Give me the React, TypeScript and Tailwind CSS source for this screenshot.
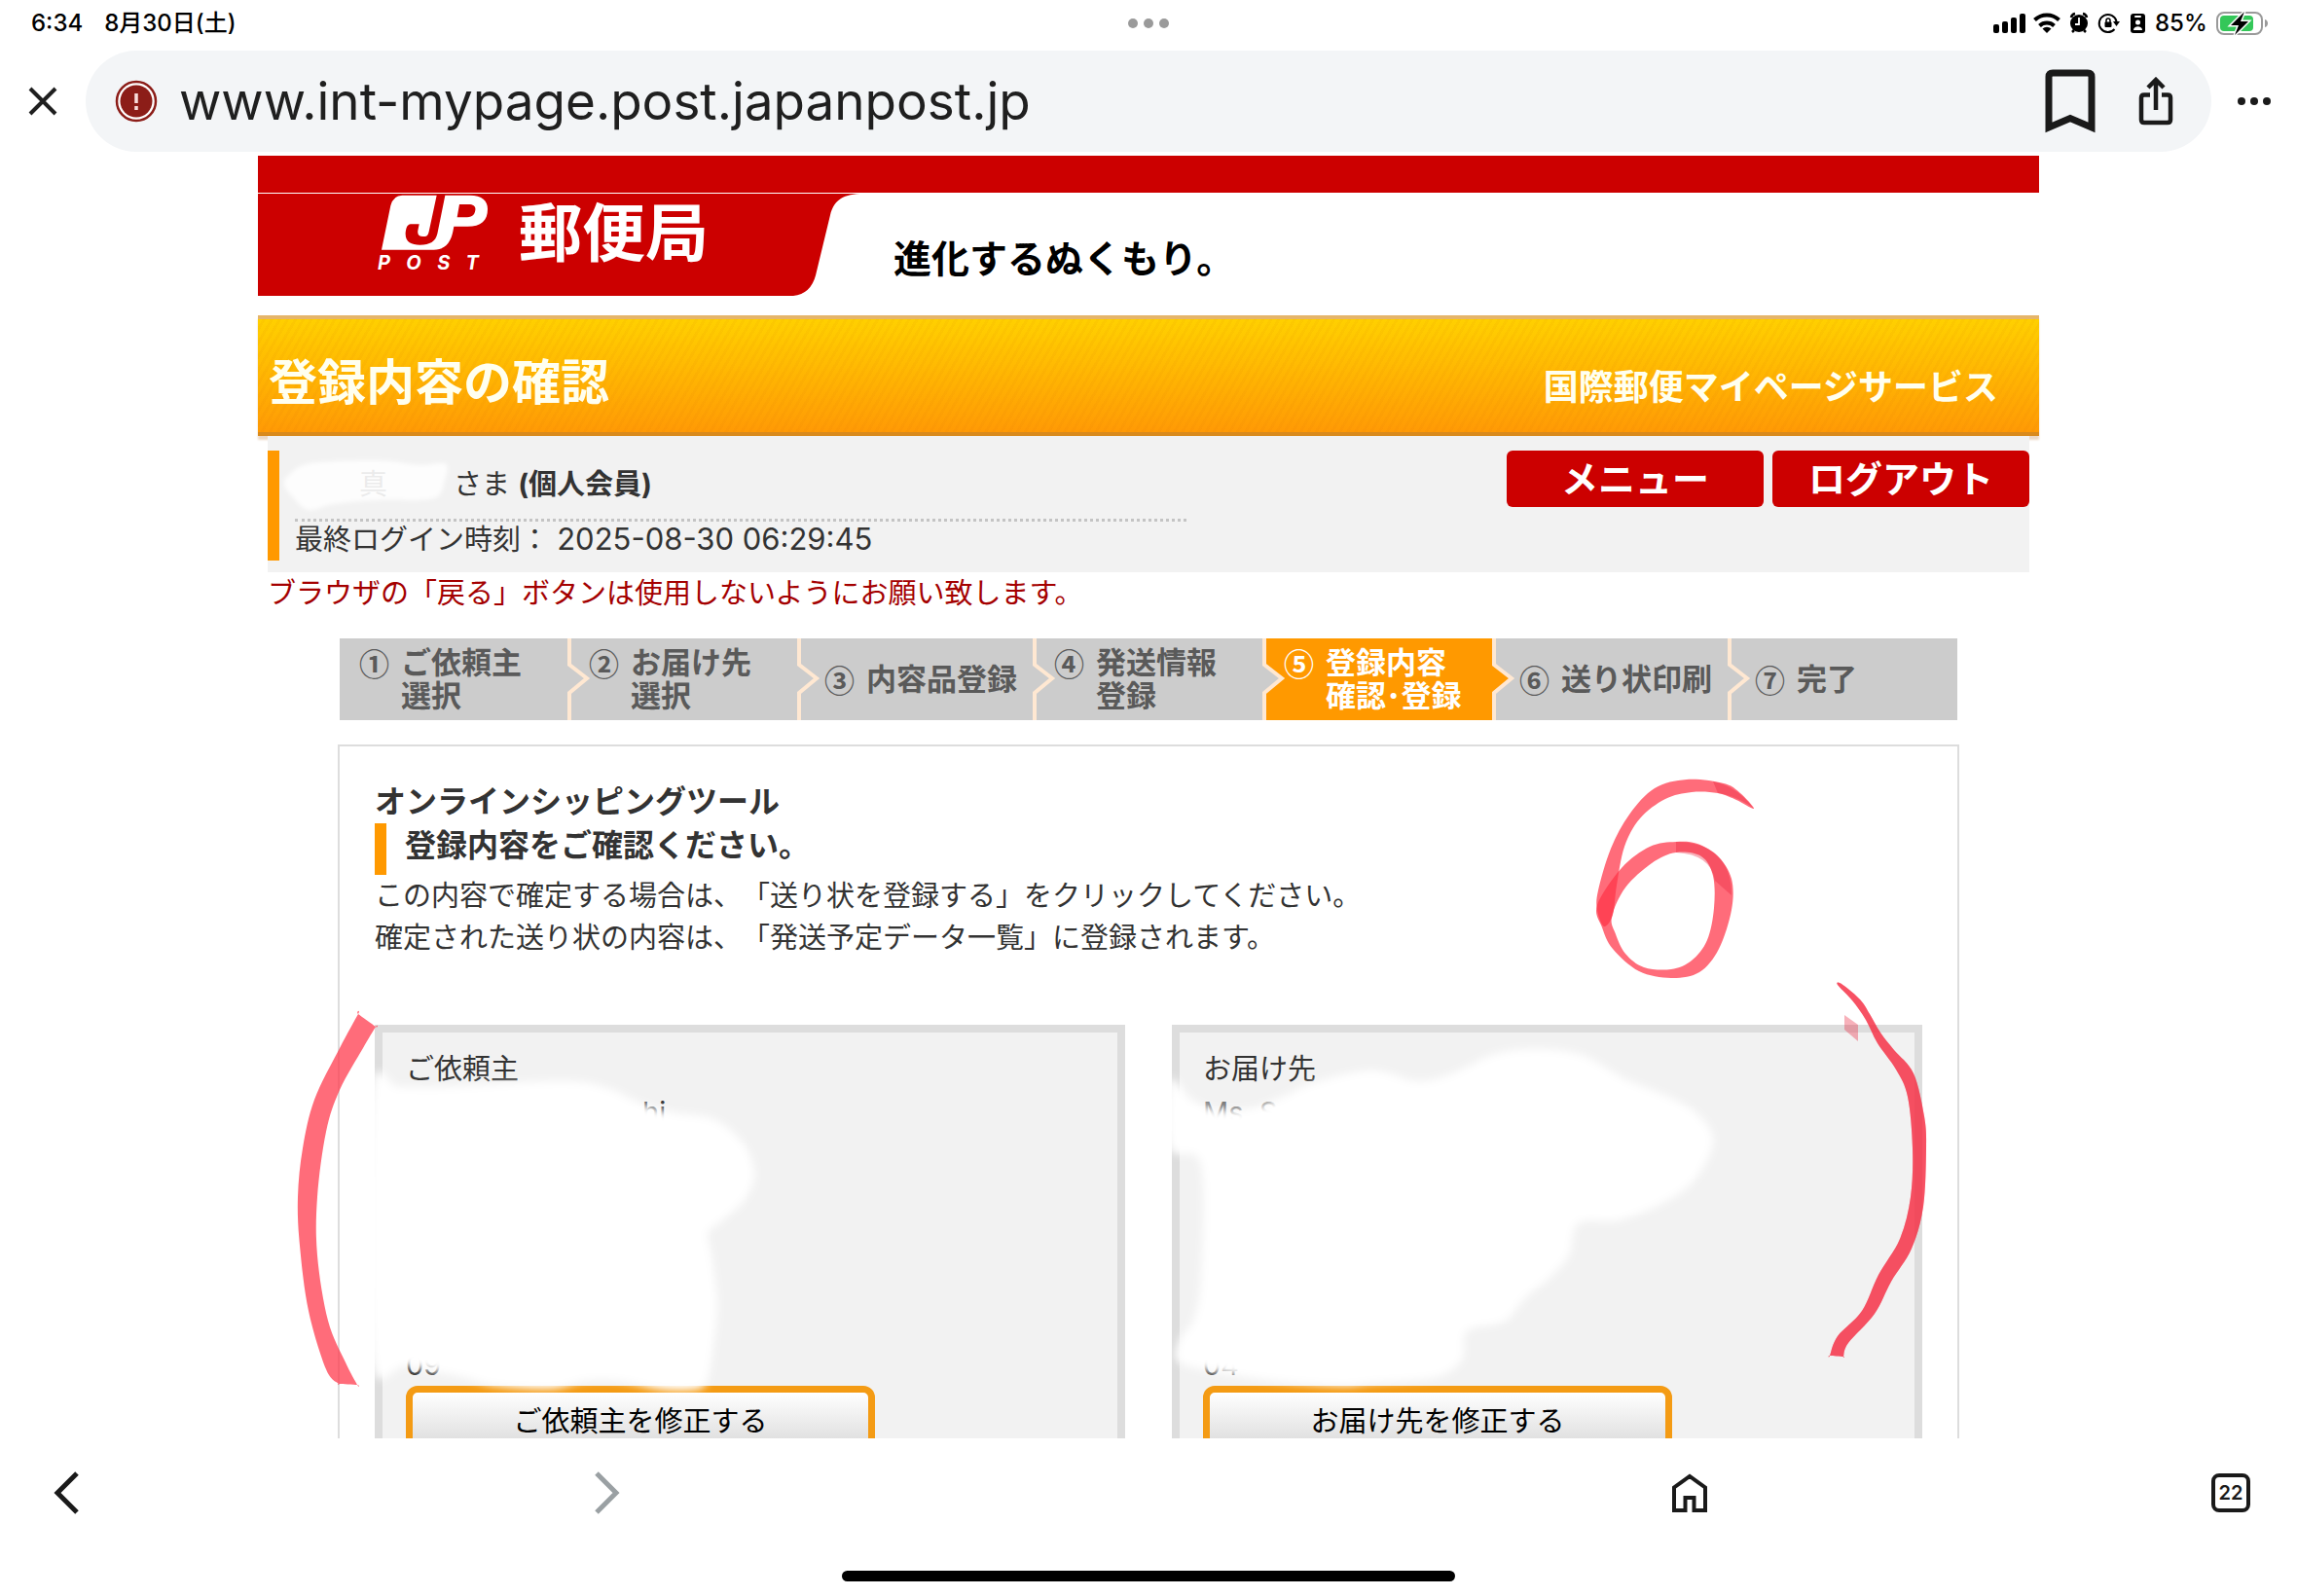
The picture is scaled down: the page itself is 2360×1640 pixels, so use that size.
import { ReactNode } from "react";
import clsx from "clsx";

interface Step {
  mark: string;
  lines: string[];
  active?: boolean;
}

type Point = [number, number];

const STEPS: Step[] = [
  { mark: "①", lines: ["ご依頼主", "選択"] },
  { mark: "②", lines: ["お届け先", "選択"] },
  { mark: "③", lines: ["内容品登録"] },
  { mark: "④", lines: ["発送情報", "登録"] },
  { mark: "⑤", lines: ["登録内容", "確認･登録"], active: true },
  { mark: "⑥", lines: ["送り状印刷"] },
  { mark: "⑦", lines: ["完了"] },
];

const NAME_MASK: Point[] = [
  [298, 487], [320, 476], [388, 473], [430, 478], [458, 477], [456, 496], [450, 510], [430, 514],
  [388, 514], [343, 518], [317, 524], [300, 510], [292, 497],
];

const SENDER_MASK: Point[] = [
  [382, 1122], [410, 1117], [452, 1117], [578, 1111], [624, 1118], [655, 1132], [690, 1143],
  [733, 1150], [762, 1173], [775, 1203], [767, 1230], [739, 1257], [727, 1267], [731, 1290],
  [737, 1340], [732, 1390], [726, 1420], [714, 1428], [680, 1428], [636, 1419], [600, 1419],
  [567, 1427], [510, 1424], [475, 1415], [418, 1404], [382, 1395],
];

const RECEIVER_MASK: Point[] = [
  [1202, 1110], [1225, 1130], [1250, 1140], [1285, 1139], [1315, 1128], [1352, 1112], [1410, 1100],
  [1455, 1111], [1490, 1104], [1536, 1083], [1582, 1078], [1628, 1085], [1668, 1108], [1725, 1132],
  [1755, 1157], [1758, 1183], [1730, 1223], [1668, 1253], [1622, 1257], [1612, 1290], [1592, 1313],
  [1568, 1333], [1545, 1358], [1507, 1368], [1502, 1397], [1476, 1415], [1410, 1421], [1375, 1424],
  [1295, 1417], [1216, 1402], [1211, 1380], [1226, 1357], [1234, 1313], [1234, 1197], [1202, 1180],
];

const LEFT_BRACKET: Point[] = [
  [368, 1042], [368, 1042], [349, 1077], [323, 1130], [311, 1180], [306, 1230], [308, 1280],
  [317, 1347], [335, 1407], [348, 1422], [348, 1422], [367, 1423], [367, 1423], [355, 1400],
  [337, 1357], [326, 1290], [326, 1230], [335, 1163], [349, 1120], [373, 1077], [386, 1055],
  [386, 1055],
];

const RIGHT_BRACKET: Point[] = [
  [1892, 1011], [1911, 1027], [1921, 1042], [1932, 1061], [1946, 1079], [1966, 1103], [1977, 1147],
  [1979, 1180], [1976, 1240], [1964, 1283], [1943, 1317], [1926, 1350], [1899, 1380], [1894, 1394],
  [1894, 1394], [1880, 1393], [1880, 1393], [1888, 1373], [1913, 1347], [1930, 1310], [1952, 1273],
  [1963, 1230], [1965, 1180], [1960, 1127], [1948, 1099], [1929, 1072], [1917, 1048], [1903, 1028],
  [1888, 1012],
];

const SIX_HOOK: Point[] = [
  [1802, 831], [1788, 815], [1771, 805], [1733, 801], [1700, 810], [1674, 837], [1655, 872],
  [1642, 915], [1641, 935], [1648, 952], [1657, 940], [1661, 910], [1669, 870], [1685, 841],
  [1711, 821], [1738, 814], [1765, 815], [1784, 822],
];

const SIX_OUTER: Point[] = [
  [1641, 930], [1646, 953], [1657, 975], [1684, 998], [1717, 1005], [1746, 999], [1766, 975],
  [1779, 935], [1779, 903], [1765, 880], [1744, 867], [1722, 865], [1695, 870], [1666, 892],
];

const SIX_INNER: Point[] = [
  [1656, 942], [1660, 960], [1670, 980], [1689, 994], [1717, 996], [1738, 987], [1754, 966],
  [1761, 933], [1760, 900], [1748, 880], [1722, 876], [1697, 887], [1670, 912],
];

// Closed curve through the points
function smooth(points: Point[]) {
  const n = points.length;
  let d = `M${points[0][0]} ${points[0][1]}`;
  for (let i = 0; i < n; i++) {
    const p0 = points[(i - 1 + n) % n];
    const p1 = points[i];
    const p2 = points[(i + 1) % n];
    const p3 = points[(i + 2) % n];
    d += `C${p1[0] + (p2[0] - p0[0]) / 6} ${p1[1] + (p2[1] - p0[1]) / 6} ${p2[0] - (p3[0] - p1[0]) / 6} ${
      p2[1] - (p3[1] - p1[1]) / 6
    } ${p2[0]} ${p2[1]}`;
  }
  return d + "Z";
}

function StatusIcons() {
  return (
    <svg width="284" height="32" viewBox="2046 8 284 32" aria-hidden="true">
      <rect x="2048" y="25" width="6" height="9" rx="2" />
      <rect x="2057" y="22" width="6" height="12" rx="2" />
      <rect x="2066" y="18" width="6" height="16" rx="2" />
      <rect x="2075" y="14" width="6" height="20" rx="2" />
      <g fill="none" stroke="#000" strokeWidth="4">
        <path d="M2090.500 20.500a18 18 0 0 1 25 0" />
        <path d="M2095.500 26.500a11 11 0 0 1 15 0" />
      </g>
      <path d="M2103 34l-4.500-4.500a6.500 6.500 0 0 1 9 0z" />
      <circle cx="2136" cy="24" r="9" />
      <path
        d="M2128 18a5 5 0 0 1 4-4M2144 18a5 5 0 0 0-4-4M2131 31l-2 2M2141 31l2 2"
        stroke="#000"
        strokeWidth="2.500"
        fill="none"
      />
      <path d="M2136 18v7h-4" stroke="#fff" strokeWidth="1.800" fill="none" />
      <path d="M2172.500 30a9 9 0 1 1 2-8" stroke="#000" strokeWidth="2" fill="none" />
      <path d="M2171 22h7l-3.500 5z" />
      <rect x="2162.500" y="22.500" width="7" height="5.500" rx="1" />
      <path d="M2164 23v-2a2 2 0 0 1 4 0v2" stroke="#000" strokeWidth="1.500" fill="none" />
      <rect x="2189" y="14" width="15" height="20" rx="3" />
      <rect x="2193" y="16" width="7" height="2" rx="1" fill="#fff" />
      <circle cx="2196.500" cy="23" r="2.500" fill="#fff" />
      <path d="M2192 31c0-5 9-5 9 0z" fill="#fff" />
      <text x="2214" y="32" fontSize="24" fontFamily="Inter, sans-serif" fontWeight="500">
        85%
      </text>
      <rect x="2278" y="13" width="46" height="22" rx="7" fill="none" stroke="#9a9a9a" strokeWidth="2" />
      <rect x="2281" y="16" width="34" height="16" rx="4" fill="#34c759" />
      <path d="M2327 20c4 1 4 7 0 8z" fill="#9a9a9a" />
      <path d="M2306 12l-14 14h8l-4 10 14-14h-8z" stroke="#fff" strokeWidth="3" paintOrder="stroke" />
    </svg>
  );
}

function StatusBar() {
  return (
    <div className="relative flex h-12 items-center justify-between pr-[30px] pl-8 text-[24px] font-medium text-black">
      <div className="flex gap-[22px]">
        <span>6:34</span>
        <span>8月30日(土)</span>
      </div>
      <div className="absolute inset-x-0 flex justify-center gap-[6px]">
        <span className="size-[10px] rounded-full bg-[#9a9a9a]" />
        <span className="size-[10px] rounded-full bg-[#9a9a9a]" />
        <span className="size-[10px] rounded-full bg-[#9a9a9a]" />
      </div>
      <StatusIcons />
    </div>
  );
}

function AddressBar() {
  return (
    <div className="mt-1 flex h-[104px] items-center">
      <button aria-label="閉じる" className="flex w-[88px] justify-center">
        <svg width="30" height="30" viewBox="0 0 30 30" stroke="#1f1f1f" strokeWidth="4">
          <path d="M2 2l26 26M28 2L2 28" />
        </svg>
      </button>
      <div className="flex h-full flex-1 items-center rounded-full bg-[#f3f5f7] pr-[39px] pl-[30px]">
        <svg width="44" height="44" viewBox="0 0 44 44" className="shrink-0" aria-hidden="true">
          <circle cx="22" cy="22" r="20" fill="#fff" stroke="#8c1d18" strokeWidth="2.500" />
          <circle cx="22" cy="22" r="16.500" fill="#8c1d18" />
          <path d="M22 14v10M22 27v4" stroke="#f9dedc" strokeWidth="3.500" />
        </svg>
        <input
          aria-label="アドレス"
          defaultValue="www.int-mypage.post.japanpost.jp"
          className="min-w-0 flex-1 bg-transparent pt-[2px] pl-[22px] text-[53px] text-[#1f1f1f] outline-none"
        />
        <button aria-label="ブックマーク">
          <svg width="52" height="66" viewBox="0 0 52 66" fill="none" stroke="#1a1a1a" strokeWidth="7">
            <path d="M4 60V8q0-4 4-4h36q4 0 4 4v52L26 50.500z" />
          </svg>
        </button>
        <button aria-label="共有" className="ml-[44px]">
          <svg width="36" height="50" viewBox="0 0 36 50" fill="none" stroke="#1a1a1a" strokeWidth="4.500">
            <path d="M12 18.500H6q-3 0-3 3V44q0 3 3 3h24q3 0 3-3V21.500q0-3-3-3h-6" />
            <path d="M18 34V4M10 11l8-8 8 8" />
          </svg>
        </button>
      </div>
      <button aria-label="その他" className="flex w-[88px] justify-center gap-[5px]">
        <span className="size-2 rounded-full bg-[#1a1a1a]" />
        <span className="size-2 rounded-full bg-[#1a1a1a]" />
        <span className="size-2 rounded-full bg-[#1a1a1a]" />
      </button>
    </div>
  );
}

function SiteHeader() {
  return (
    <header>
      <div className="h-[38px] bg-[#cc0000]" />
      <div className="mt-px flex h-[105px]">
        <div className="flex w-[550px] bg-[#cc0000] pl-[123px]">
          <div className="w-[115px] pt-px">
            <svg width="110" height="57" viewBox="66 30 330 171" fill="#fff" className="ml-1" aria-label="JP">
              <path d="M130 32h106l-24 112c-3 14-8 16-18 15-12 0-18-6-16-18l4-20h-26c-12 2-14 12-16 26-2 30 18 38 44 38 32 0 48-10 54-34L262 32h75c40 0 56 18 56 42 0 36-20 54-62 54h-42c-4 24-8 38-18 52-12 14-24 20-44 20H66L94 64q8-32 36-32zM306 60l-7 40h24c20 0 30-6 32-22 2-12-6-18-20-18z" />
            </svg>
            <div className="flex w-[104px] justify-between text-[20px] leading-[26px] font-bold text-white italic">
              <span>P</span>
              <span>O</span>
              <span>S</span>
              <span>T</span>
            </div>
          </div>
          <div className="ml-[30px] text-[65px] leading-[82px] font-bold text-white">郵便局</div>
        </div>
        <svg width="75" height="105" viewBox="0 0 75 105" fill="#cc0000" aria-hidden="true">
          <path d="M-1 0H72C52 0 42 6 38 22L23 84Q18 103 0 105H-1z" />
        </svg>
        <p className="pt-10 pl-7 text-[39px] leading-[54px] font-bold text-black">進化するぬくもり。</p>
      </div>
      <div className="mt-[20px] border-y-4 border-t-[#e5b56a] border-b-[#d98a1c] bg-[repeating-linear-gradient(120deg,transparent_0px,transparent_4px,rgba(200,90,0,0.05)_4px,rgba(200,90,0,0.05)_7px),linear-gradient(#ffd000,#ff9a05)] shadow-[0_4px_2px_#ecd9c6]">
        <div className="flex h-[116px] items-center justify-between pr-[42px] pl-[11px] text-[#fffff0]">
          <h1 className="pt-[14px] text-[50px] font-bold">登録内容の確認</h1>
          <p className="pt-[24px] text-[36px] font-bold">国際郵便マイページサービス</p>
        </div>
      </div>
    </header>
  );
}

function RedButton({ children }: { children: ReactNode }) {
  return (
    <button className="h-[58px] w-[264px] rounded-md bg-[#cc0000] text-[38px] leading-[58px] font-bold text-white">
      {children}
    </button>
  );
}

function MemberInfo() {
  return (
    <section className="mx-[10px]">
      <div className="flex items-start justify-between bg-[#f2f2f2] pt-[15px] pb-3">
        <div className="flex-1 border-l-12 border-[#ff9900] pl-4 leading-[38px]">
          <div className="w-3/4 max-w-[916px] border-b-3 border-dotted border-[#c4c4c4] pt-[16px] pb-[16px]">
            <span className="ml-[66px] text-[#777777]">真</span>
            <span className="ml-[68px]">さま </span>
            <b>(個人会員)</b>
          </div>
          <div className="pb-[2px]">
            最終ログイン時刻： <span className="text-[31px] leading-none">2025-08-30 06:29:45</span>
          </div>
        </div>
        <div className="flex gap-[9px]">
          <RedButton>メニュー</RedButton>
          <RedButton>ログアウト</RedButton>
        </div>
      </div>
      <p className="leading-[43px] text-[#a40000]">ブラウザの「戻る」ボタンは使用しないようにお願い致します。</p>
    </section>
  );
}

function StepBar() {
  return (
    <ol className="mx-[84px] mt-[25px] flex text-[31px] leading-[34px] font-bold">
      {STEPS.map((step, i) => (
        <li
          key={step.mark}
          className={clsx(
            "relative flex h-[84px] gap-3 whitespace-nowrap",
            i < STEPS.length - 1 ? "flex-1" : "w-[234px]",
            step.lines.length === 1 ? "items-center pl-[26px]" : "pt-2 pl-5",
            step.active ? "bg-[#ff9900] text-white" : "bg-[#cccccc] text-[#5a5a5a]"
          )}
        >
          <span className="font-['Noto_Sans_CJK_JP',sans-serif]">{step.mark}</span>
          <span>
            {step.lines.map((line) => (
              <span key={line} className="block">
                {line}
              </span>
            ))}
          </span>
          {i < STEPS.length - 1 && (
            <svg
              width="26"
              height="84"
              viewBox="0 0 26 84"
              className={clsx(
                "absolute top-0 -right-6 z-10",
                step.active ? "text-[#ff9900]" : "text-[#cccccc]"
              )}
              aria-hidden="true"
            >
              <path d="M0 0H2V27L20 41L2 56V84H0z" fill="currentColor" />
              <path d="M2 0V27L20 41L2 56V84" fill="none" stroke="#ffe8d2" strokeWidth="4" />
            </svg>
          )}
        </li>
      ))}
    </ol>
  );
}

function AddressCard({ title, button, children }: { title: string; button: string; children: ReactNode }) {
  return (
    <div className="flex-1 border-8 border-[#dddddd] bg-[#f2f2f2] px-[24px] pt-4 leading-[44px]">
      <h3>{title}</h3>
      <div className="h-[303px]">{children}</div>
      <button className="h-[82px] w-[482px] rounded-xl border-7 border-[#f49b14] bg-linear-to-b from-white to-[#d4d4d4] pb-2 leading-[36px] text-black">
        {button}
      </button>
    </div>
  );
}

function ShippingTool() {
  return (
    <main className="mx-[82px] mt-[25px] border-2 border-[#dddddd] px-[36px] pt-[35px] pb-10">
      <h2 className="text-[32px] leading-[44px] font-bold">オンラインシッピングツール</h2>
      <h3 className="border-l-12 border-[#ff9900] pb-2 pl-[19px] text-[32px] leading-[45px] font-bold">
        登録内容をご確認ください。
      </h3>
      <p className="leading-[43px]">
        この内容で確定する場合は、「送り状を登録する」をクリックしてください。
        <br />
        確定された送り状の内容は、「発送予定データ一覧」に登録されます。
      </p>
      <div className="mt-[68px] flex gap-12">
        <AddressCard title="ご依頼主" button="ご依頼主を修正する">
          <div className="pl-[243px]">hi</div>
          <div className="pt-[216px]">09</div>
        </AddressCard>
        <AddressCard title="お届け先" button="お届け先を修正する">
          <div className="text-[#777777]">Ms. S</div>
          <div className="pt-[216px]">04</div>
        </AddressCard>
      </div>
    </main>
  );
}

function Annotations() {
  return (
    <svg
      className="pointer-events-none absolute top-0 left-0 z-20 w-full"
      viewBox="0 160 2360 1318"
      aria-hidden="true"
    >
      <defs>
        <filter id="soft" x="-5%" y="-5%" width="110%" height="110%">
          <feGaussianBlur stdDeviation="4" />
        </filter>
        <filter id="softSmall" x="-10%" y="-20%" width="120%" height="140%">
          <feGaussianBlur stdDeviation="2" />
        </filter>
      </defs>
      <path d={smooth(NAME_MASK)} fill="#fff" fillOpacity="0.85" filter="url(#softSmall)" />
      <path d={smooth(SENDER_MASK)} fill="#fff" filter="url(#soft)" />
      <path d={smooth(RECEIVER_MASK)} fill="#fff" filter="url(#soft)" />
      <g fill="#ff3347" fillOpacity="0.72">
        <path d={smooth(LEFT_BRACKET)} />
        <path d={smooth(RIGHT_BRACKET)} />
        <path d={smooth(SIX_HOOK)} />
        <path d={smooth(SIX_OUTER) + smooth(SIX_INNER)} fillRule="evenodd" />
      </g>
      <g fill="#e8203a" fillOpacity="0.35">
        <path d={smooth(RIGHT_BRACKET)} />
        <path d="M1802 831Q1785 808 1760 803L1765 815Q1785 818 1802 831z" />
        <path d="M1722 865Q1779 866 1779 920L1762 905Q1758 878 1722 876z" />
        <path d="M1895 1043L1909 1053V1070L1895 1058z" />
      </g>
    </svg>
  );
}

function BottomBar() {
  return (
    <nav className="h-[162px] bg-white">
      <div className="flex h-[112px] items-center justify-between px-12">
        <button aria-label="戻る" className="flex w-10 justify-center">
          <svg width="28" height="46" viewBox="0 0 28 46" fill="none" stroke="#1a1a1a" strokeWidth="5">
            <path d="M25 3L5 23l20 20" />
          </svg>
        </button>
        <button aria-label="進む" disabled className="flex w-10 justify-center">
          <svg width="28" height="46" viewBox="0 0 28 46" fill="none" stroke="#9aa0a3" strokeWidth="5">
            <path d="M3 3l20 20L3 43" />
          </svg>
        </button>
        <span className="w-10" />
        <button aria-label="ホーム" className="flex w-10 justify-center">
          <svg width="36" height="40" viewBox="0 0 36 40" fill="none" stroke="#1a1a1a" strokeWidth="4">
            <path d="M2 38V14.500L18 3l16 11.500V38H22.500V25h-9v13z" />
          </svg>
        </button>
        <button
          aria-label="タブ"
          className="size-10 rounded-lg border-4 border-[#1a1a1a] text-[20px] leading-none font-semibold text-[#1a1a1a]"
        >
          22
        </button>
      </div>
      <div className="mx-auto mt-6 h-[11px] w-[630px] rounded-full bg-black" />
    </nav>
  );
}

export default function App() {
  return (
    <div className="flex h-screen flex-col overflow-hidden bg-white font-['Inter','Noto_Sans_CJK_JP',sans-serif] text-[29px] text-[#333333] [text-spacing-trim:space-all]">
      <StatusBar />
      <AddressBar />
      <div className="relative mt-1 flex-1 overflow-hidden">
        <div className="px-[265px]">
          <SiteHeader />
          <MemberInfo />
          <StepBar />
          <ShippingTool />
        </div>
        <Annotations />
      </div>
      <BottomBar />
    </div>
  );
}
